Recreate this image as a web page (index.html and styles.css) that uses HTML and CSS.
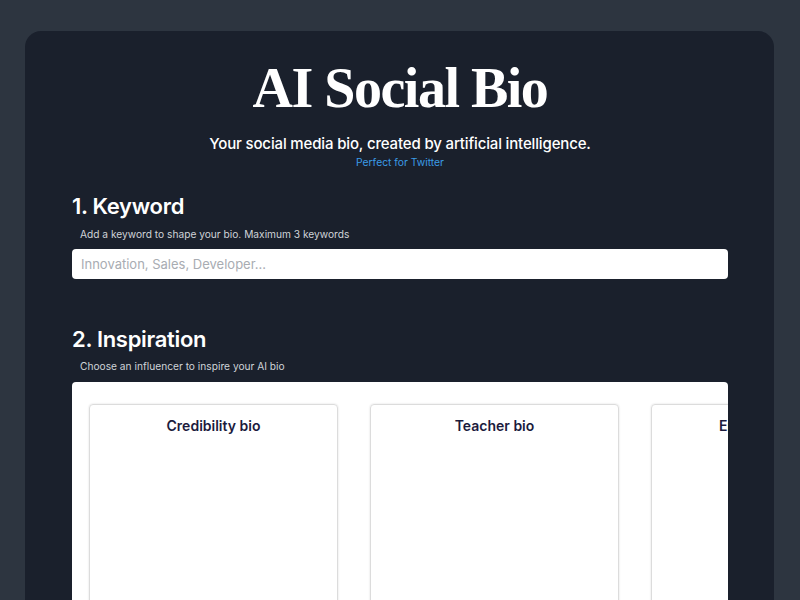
FILE: index.html
```html
<!DOCTYPE html>
<html lang="en">
<head>
    <meta charset="UTF-8">
    <meta name="viewport" content="width=device-width, initial-scale=1.0">
    <title>AI Social Bio</title>
    <link rel="stylesheet" href="styles.css">
</head>
<body>
    <div class="app-container">
        <header class="cabecalho">
            <h1 class="titulo">AI Social Bio</h1>
            <p class="subtitulo">Your social media bio, created by artificial intelligence.</p>
            <p class="destaque">Perfect for Twitter</p>
        </header>

        <section class="etapa">
            <h2>1. Keyword</h2>
            <p class="descricao">Add a keyword to shape your bio. Maximum 3 keywords</p>
            <input type="text" class="campo-keyword" placeholder="Innovation, Sales, Developer...">
        </section>

        <section class="etapa etapa-inspiracao">
            <h2>2. Inspiration</h2>
            <p class="descricao">Choose an influencer to inspire your AI bio</p>
            <div class="painel-bios">
                <div class="bio-card"><h3>Credibility bio</h3></div>
                <div class="bio-card"><h3>Teacher bio</h3></div>
                <div class="bio-card"><h3>Entrepreneur bio</h3></div>
            </div>
        </section>
    </div>
</body>
</html>
```

FILE: styles.css
```css
body {
    font-family: Inter, "Noto Sans", sans-serif;
    margin: 0;
    padding: 31px 26px 0 25px;
    background-color: #2d3540;
    color: #fff;
    height: 600px;
    overflow: hidden;
    box-sizing: border-box;
}
.app-container {
    background-color: #1a202c;
    border-radius: 16px 16px 0 0;
    padding: 24px 46px 0 47px;
    min-height: 600px;
}
.cabecalho {
    text-align: center;
}
.titulo {
    font-family: "Liberation Serif", "DejaVu Serif", serif;
    font-size: 56px;
    letter-spacing: -1.5px;
    font-weight: bold;
    line-height: 1.2;
    margin: 0;
}
.subtitulo {
    font-size: 15px;
    font-weight: 500;
    letter-spacing: -0.15px;
    margin: 12px 0 0;
}
.destaque {
    font-size: 10.3px;
    color: #3a9be6;
    margin: 3px 0 0;
}
.etapa {
    margin-top: 25px;
}
.etapa h2 {
    font-size: 22px;
    font-weight: 600;
    margin: 0;
    letter-spacing: -0.3px;
}
.descricao {
    font-size: 10.2px;
    color: #cfd3d8;
    margin: 9px 0 9px 8px;
}
.campo-keyword {
    width: 100%;
    box-sizing: border-box;
    height: 30px;
    border: none;
    border-radius: 4px;
    padding: 0 9px;
    font-family: Inter, sans-serif;
    font-size: 13px;
    outline: none;
}
.campo-keyword::placeholder {
    color: #a8acb2;
}
.etapa-inspiracao {
    margin-top: 47px;
}
.etapa-inspiracao .descricao {
    margin-top: 8px;
    margin-bottom: 10px;
}
.painel-bios {
    background-color: #fff;
    border-radius: 4px 4px 0 0;
    padding: 22px 17px 0;
    display: flex;
    gap: 32px;
    overflow: hidden;
    height: 300px;
}
.bio-card {
    flex: 0 0 249px;
    box-sizing: border-box;
    border: 1px solid #dcdcdc;
    border-radius: 4px;
    box-shadow: 0 0 2px rgba(0, 0, 0, 0.15);
    text-align: center;
}
.bio-card h3 {
    font-size: 14px;
    font-weight: 600;
    color: #1c1b3d;
    margin: 12px 0 0;
}
```
